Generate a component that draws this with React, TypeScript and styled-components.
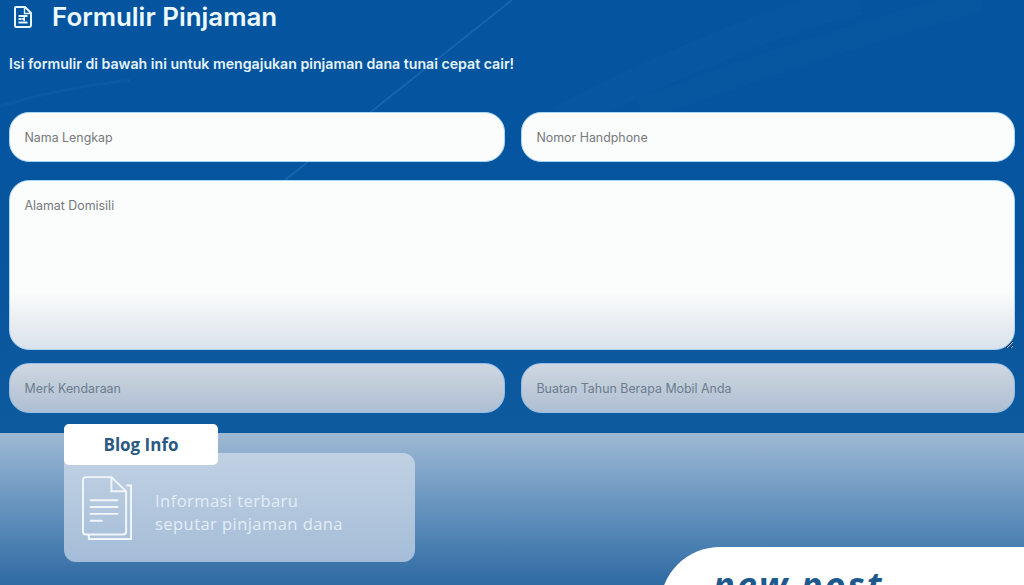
import React from "react";
import styled, { createGlobalStyle } from "styled-components";

const GlobalStyle = createGlobalStyle`
  html, body {
    margin: 0;
    padding: 0;
    background: #07559f;
  }
  * {
    box-sizing: border-box;
  }
`;

const App = () => {
  return (
    <>
      <GlobalStyle />
      <Page>
        <FormSection>
          <BackgroundLines viewBox="0 0 1024 433" preserveAspectRatio="none">
            <path d="M285 180 L512 0" stroke="#2f7cc4" strokeWidth="2" fill="none" opacity="0.4" />
            <path d="M0 106 Q60 88 130 80" stroke="#2f7cc4" strokeWidth="3" fill="none" opacity="0.15" />
            <path d="M560 120 Q760 20 860 0" stroke="#2a74bb" strokeWidth="30" fill="none" opacity="0.08" />
            <path d="M640 110 Q800 50 980 0" stroke="#2a74bb" strokeWidth="24" fill="none" opacity="0.07" />
          </BackgroundLines>
          <TitleRow>
            <FormIcon viewBox="0 0 18 22">
              <path d="M2 1h9l6 6v12a2 2 0 0 1-2 2H2a1 1 0 0 1-1-1V2a1 1 0 0 1 1-1z" fill="none" stroke="#e6f6fd" strokeWidth="2" />
              <path d="M10.500 1.500V7.500H16.500" fill="none" stroke="#e6f6fd" strokeWidth="1.400" />
              <path d="M4.500 10h9M4.500 13h3M4.500 16.500h9" stroke="#e6f6fd" strokeWidth="1.800" />
              <path d="M7 13l4-2.500v5z" fill="#e6f6fd" />
            </FormIcon>
            <Title>Formulir Pinjaman</Title>
          </TitleRow>
          <Subtitle>Isi formulir di bawah ini untuk mengajukan pinjaman dana tunai cepat cair!</Subtitle>
          <Fields>
            <TextInput placeholder="Nama Lengkap" />
            <TextInput placeholder="Nomor Handphone" />
            <AddressInput placeholder="Alamat Domisili" />
            <FadedInput placeholder="Merk Kendaraan" />
            <FadedInput placeholder="Buatan Tahun Berapa Mobil Anda" />
          </Fields>
        </FormSection>
        <BlogSection>
          <BlogCard>
            <BlogTab>Blog Info</BlogTab>
            <DocIcon viewBox="0 0 52 66">
              <path d="M7 60v4.500h43V10h-5" fill="none" stroke="#f1f6fb" strokeWidth="2" />
              <path d="M30 1.500H4a3 3 0 0 0-3 3V57a3 3 0 0 0 3 3h38a3 3 0 0 0 3-3V16z" fill="none" stroke="#f1f6fb" strokeWidth="2" />
              <path d="M30 1.500V16h15" fill="none" stroke="#f1f6fb" strokeWidth="2" />
              <path d="M8 25h29M8 32h29M8 39h29M8 46h13" stroke="#f1f6fb" strokeWidth="2" />
            </DocIcon>
            <BlogText>
              Informasi terbaru
              <br />
              seputar pinjaman dana
            </BlogText>
          </BlogCard>
          <NewPostPanel>
            <NewPostText>new post</NewPostText>
          </NewPostPanel>
        </BlogSection>
      </Page>
    </>
  );
};

export default App;

const Page = styled.div`
  width: 1024px;
  height: 585px;
  overflow: hidden;
  display: flex;
  flex-direction: column;
`;

const FormSection = styled.section`
  position: relative;
  height: 433px;
  flex-shrink: 0;
  padding: 0 9px;
  background: linear-gradient(180deg, #04549f 0%, #07559f 60%, #0e5a9e 100%);
`;

const BackgroundLines = styled.svg`
  position: absolute;
  top: 0;
  left: 0;
  width: 100%;
  height: 100%;
`;

const TitleRow = styled.div`
  position: relative;
  height: 33px;
  display: flex;
  align-items: center;
  gap: 20px;
  padding-left: 5px;
`;

const FormIcon = styled.svg`
  width: 18px;
  height: 22px;
  flex-shrink: 0;
`;

const Title = styled.h1`
  margin: 0;
  font-family: Inter, sans-serif;
  font-size: 25.900px;
  font-weight: 600;
  line-height: 33px;
  color: #ecf9fe;
`;

const Subtitle = styled.p`
  position: relative;
  margin: 21px 0 0;
  font-family: Inter, sans-serif;
  font-size: 14.150px;
  font-weight: 600;
  line-height: 20px;
  color: #e4f3fc;
`;

const Fields = styled.div`
  position: relative;
  margin-top: 38px;
  display: grid;
  grid-template-columns: 496px 494px;
  column-gap: 16px;
  grid-template-rows: 50px 188px 63px;
`;

const fieldStyle = `
  width: 100%;
  height: 100%;
  display: block;
  border-radius: 20px;
  border: 1px solid #a9d6f5;
  outline: none;
  padding: 0 14.500px;
  font-family: Inter, sans-serif;
  font-size: 12.400px;
  color: #6d7278;
  &::placeholder {
    color: #75797d;
    opacity: 1;
  }
`;

const TextInput = styled.input`
  ${fieldStyle}
  margin: 0;
  background: #fbfcfc;
`;

const AddressInput = styled.textarea`
  ${fieldStyle}
  grid-column: 1 / -1;
  margin: 18px 0 0;
  height: 170px;
  padding-top: 17px;
  resize: vertical;
  background: linear-gradient(180deg, #fbfcfc 0%, #fbfcfc 66%, #e3e9ef 90%, #d9e3ec 100%);
`;

const FadedInput = styled.input`
  ${fieldStyle}
  margin: 13px 0 0;
  height: 50px;
  border-color: #93bfe9;
  background: linear-gradient(180deg, #cfd7e0 0%, #aebfd3 100%);
  &::placeholder {
    color: #6c7c8e;
  }
`;

const BlogSection = styled.section`
  flex: 1;
  min-height: 0;
  display: flex;
  align-items: flex-start;
  padding: 20px 0 0 64px;
  background: linear-gradient(180deg, #9fb9d4 0%, #6f9ac3 40%, #2f6aa3 100%);
`;

const BlogCard = styled.div`
  position: relative;
  width: 351px;
  height: 109px;
  display: flex;
  align-items: center;
  padding-left: 18px;
  border-radius: 12px;
  background: linear-gradient(180deg, #c1d1e3 0%, #a4bdd8 100%);
`;

const BlogTab = styled.div`
  position: absolute;
  top: -29px;
  left: 0;
  width: 154px;
  height: 41px;
  display: flex;
  align-items: center;
  justify-content: center;
  border-radius: 5px;
  background: #ffffff;
  font-family: "Open Sans", sans-serif;
  font-size: 17px;
  font-weight: 700;
  color: #2a5a80;
`;

const DocIcon = styled.svg`
  width: 51px;
  height: 66px;
  flex-shrink: 0;
`;

const BlogText = styled.div`
  margin: 8px 0 0 22px;
  font-family: "Open Sans", sans-serif;
  font-size: 16.500px;
  line-height: 23px;
  letter-spacing: 0.450px;
  color: #e4edf6;
`;

const NewPostPanel = styled.div`
  margin: 94px 0 0 auto;
  width: 364px;
  height: 60px;
  padding: 16px 0 0 53px;
  border-top-left-radius: 62px;
  background: #ffffff;
`;

const NewPostText = styled.div`
  font-family: "Open Sans", sans-serif;
  font-size: 36px;
  font-style: italic;
  font-weight: 700;
  line-height: 44px;
  letter-spacing: 2.100px;
  color: #1f5a8e;
`;
